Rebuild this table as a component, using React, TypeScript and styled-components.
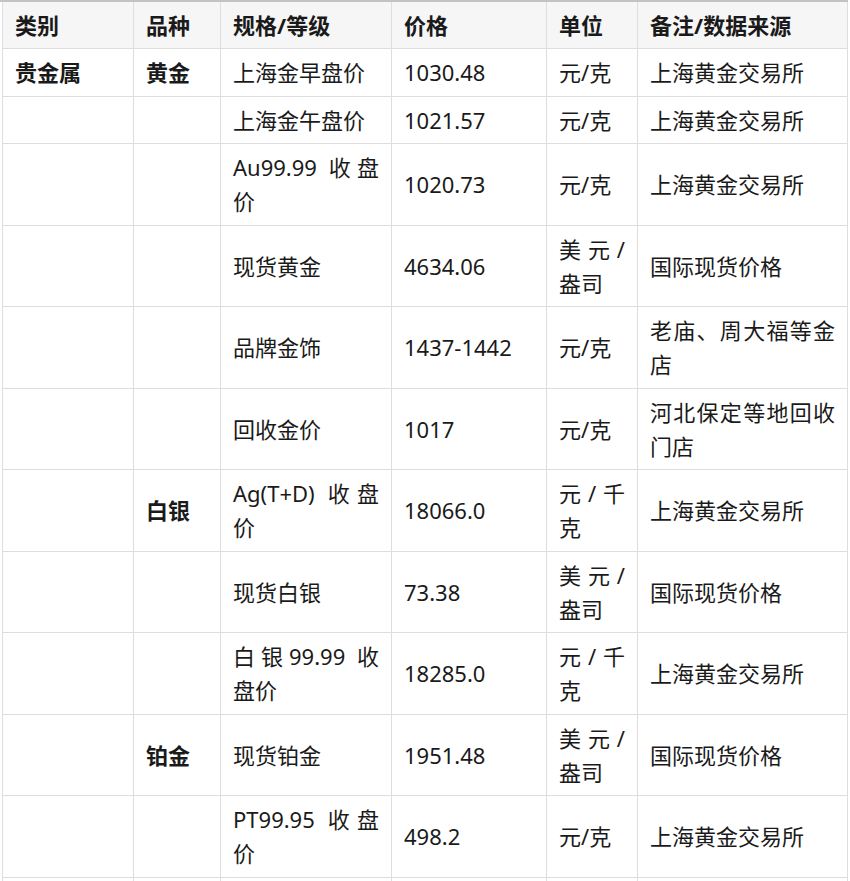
import React from "react";
import styled, { createGlobalStyle } from "styled-components";

const GlobalStyle = createGlobalStyle`
  html, body {
    margin: 0;
    padding: 0;
    background: #ffffff;
  }
  body {
    font-family: "Noto Sans", "Noto Sans CJK SC", sans-serif;
    color: #1f1f1f;
  }
`;

const Wrapper = styled.div`
  padding-left: 2px;
  width: 846px;
  border-top: 2px solid #c3c3c3;
`;

const Table = styled.table`
  width: 846px;
  table-layout: fixed;
  border-collapse: separate;
  border-spacing: 0;
  border-left: 1px solid #dedede;
  font-family: "Noto Sans", "Noto Sans CJK SC", sans-serif;
  font-size: 22px;
  line-height: 34px;
  color: #1a1a1a;
`;

const HeadCell = styled.th<{ $w: number }>`
  width: ${(p) => p.$w}px;
  box-sizing: border-box;
  padding: 6px 12px;
  background: #f6f6f6;
  font-weight: 700;
  text-align: left;
  vertical-align: middle;
  border-right: 1px solid #dedede;
  border-bottom: 1px solid #dedede;
`;

const Cell = styled.td<{ $bold?: boolean }>`
  box-sizing: border-box;
  padding: 6.25px 12px;
  height: 47.5px;
  font-weight: ${(p) => (p.$bold ? 700 : 400)};
  text-align: justify;
  vertical-align: middle;
  word-break: break-all;
  border-right: 1px solid #dedede;
  border-bottom: 1px solid #dedede;
`;

type Row = [string, string, string, string, string, string];

const headers: { label: string; w: number }[] = [
  { label: "类别", w: 131 },
  { label: "品种", w: 87 },
  { label: "规格/等级", w: 171 },
  { label: "价格", w: 155 },
  { label: "单位", w: 91 },
  { label: "备注/数据来源", w: 210 },
];

const rows: Row[] = [
  ["贵金属", "黄金", "上海金早盘价", "1030.48", "元/克", "上海黄金交易所"],
  ["", "", "上海金午盘价", "1021.57", "元/克", "上海黄金交易所"],
  ["", "", "Au99.99 收盘价", "1020.73", "元/克", "上海黄金交易所"],
  ["", "", "现货黄金", "4634.06", "美元/盎司", "国际现货价格"],
  ["", "", "品牌金饰", "1437-1442", "元/克", "老庙、周大福等金店"],
  ["", "", "回收金价", "1017", "元/克", "河北保定等地回收门店"],
  ["", "白银", "Ag(T+D) 收盘价", "18066.0", "元/千克", "上海黄金交易所"],
  ["", "", "现货白银", "73.38", "美元/盎司", "国际现货价格"],
  ["", "", "白银99.99 收盘价", "18285.0", "元/千克", "上海黄金交易所"],
  ["", "铂金", "现货铂金", "1951.48", "美元/盎司", "国际现货价格"],
  ["", "", "PT99.95 收盘价", "498.2", "元/克", "上海黄金交易所"],
  ["", "", "", "", "", ""],
];

export default function App() {
  return (
    <>
      <GlobalStyle />
      <Wrapper>
        <Table>
          <thead>
            <tr>
              {headers.map((h) => (
                <HeadCell key={h.label} $w={h.w}>
                  {h.label}
                </HeadCell>
              ))}
            </tr>
          </thead>
          <tbody>
            {rows.map((r, i) => (
              <tr key={i}>
                {r.map((c, j) => (
                  <Cell key={j} $bold={j < 2}>
                    {c}
                  </Cell>
                ))}
              </tr>
            ))}
          </tbody>
        </Table>
      </Wrapper>
    </>
  );
}
